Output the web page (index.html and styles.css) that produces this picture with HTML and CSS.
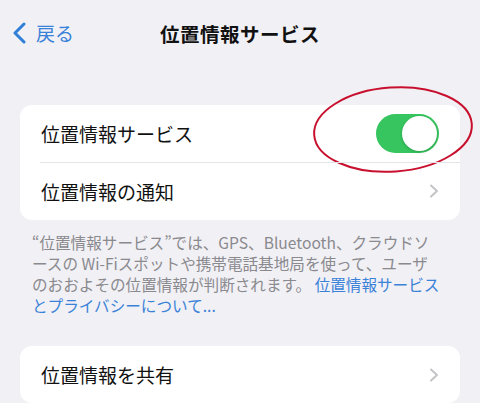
FILE: index.html
```html
<!DOCTYPE html>
<html lang="ja">
<head>
    <meta charset="UTF-8">
    <meta name="viewport" content="width=device-width, initial-scale=1.0">
    <title>位置情報サービス</title>
    <link rel="stylesheet" href="styles.css">
</head>
<body>
    <div class="nav">
        <a class="back" href="#">
            <svg class="back-icon" width="16" height="22" viewBox="0 0 16 22">
                <path d="M13 2 L4 11 L13 20" fill="none" stroke="#2f7fd6" stroke-width="3" stroke-linecap="round" stroke-linejoin="round"/>
            </svg>
            <span>戻る</span>
        </a>
        <div class="title">位置情報サービス</div>
    </div>

    <div class="card">
        <div class="row">
            <span class="label">位置情報サービス</span>
            <div class="toggle"><div class="knob"></div></div>
            <svg class="mark" width="170" height="95" viewBox="0 0 170 95">
                <ellipse cx="85" cy="47.5" rx="79" ry="42" fill="none" stroke="#c8102e" stroke-width="2" transform="rotate(-4 85 47.5)"/>
            </svg>
        </div>
        <div class="row">
            <span class="label">位置情報の通知</span>
            <svg class="chevron" width="10" height="14" viewBox="0 0 10 14">
                <path d="M2 1.5 L8 7 L2 12.5" fill="none" stroke="#c4c4c8" stroke-width="2" stroke-linecap="round" stroke-linejoin="round"/>
            </svg>
        </div>
    </div>

    <p class="note">“位置情報サービス”では、GPS、Bluetooth、クラウドソ<br>ースの Wi-Fiスポットや携帯電話基地局を使って、ユーザ<br>のおおよその位置情報が判断されます。 <a href="#">位置情報サービス<br>とプライバシーについて...</a></p>

    <div class="card">
        <div class="row">
            <span class="label">位置情報を共有</span>
            <svg class="chevron" width="10" height="14" viewBox="0 0 10 14">
                <path d="M2 1.5 L8 7 L2 12.5" fill="none" stroke="#c4c4c8" stroke-width="2" stroke-linecap="round" stroke-linejoin="round"/>
            </svg>
        </div>
    </div>
</body>
</html>
```

FILE: styles.css
```css
body {
    font-family: "Noto Sans CJK JP", "Noto Sans", sans-serif;
    background-color: #f1f0f5;
    margin: 0;
    padding: 0;
    color: #111;
}
.nav {
    position: relative;
    height: 66px;
    display: flex;
    align-items: center;
    justify-content: center;
}
.back {
    position: absolute;
    left: 11px;
    top: 22px;
    display: flex;
    align-items: center;
    gap: 9px;
    color: #3a82d8;
    text-decoration: none;
    font-size: 19px;
    line-height: 22px;
}
.title {
    font-size: 19.5px;
    font-weight: bold;
    letter-spacing: 0.5px;
}
.card {
    margin: 39px 20px 0 20px;
    background-color: white;
    border-radius: 12px;
}
.row {
    position: relative;
    height: 57px;
    display: flex;
    align-items: center;
    justify-content: space-between;
    padding: 0 21px 0 21px;
    font-size: 19px;
}
.row + .row {
    height: 58px;
}
.row + .row::before {
    content: "";
    position: absolute;
    top: 0;
    left: 20px;
    right: 0;
    height: 1px;
    background-color: #e4e4e8;
}
.toggle {
    width: 63px;
    height: 39px;
    border-radius: 20px;
    background-color: #36c55e;
    position: relative;
}
.knob {
    position: absolute;
    right: 2px;
    top: 2px;
    width: 35px;
    height: 35px;
    border-radius: 50%;
    background-color: white;
    box-shadow: 0 1px 3px rgba(0, 0, 0, 0.2);
}
.mark {
    position: absolute;
    left: 288px;
    top: -23px;
}
.note {
    margin: 12px 20px 0 32px;
    font-size: 15.6px;
    line-height: 21px;
    color: #8a8a8e;
    white-space: nowrap;
}
.note a {
    color: #3a82d8;
    text-decoration: none;
}
.note + .card {
    margin-top: 30px;
}
```
